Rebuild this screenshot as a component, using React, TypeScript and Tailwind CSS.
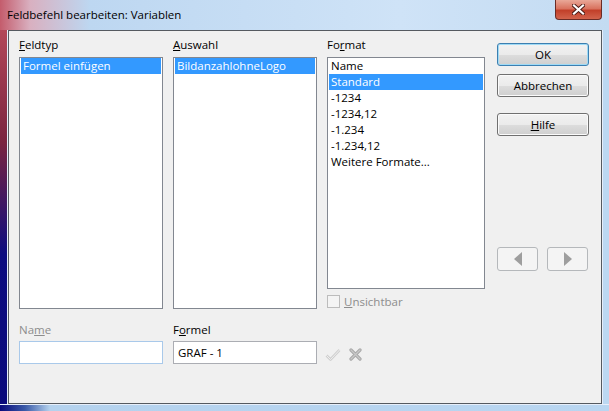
import React from "react";

const font = { fontFamily: "'Open Sans', 'Noto Sans', sans-serif" };

function ListBox({ items, selected, className }: { items: string[]; selected: number; className: string }) {
  return (
    <div className={`border border-[#828790] bg-white px-[1px] ${className}`}>
      {items.map((it, i) => (
        <div
          key={i}
          className={`h-[16px] leading-[16px] pl-[2px] whitespace-nowrap text-[11.5px] ${
            i === selected ? "bg-[#3399ff] text-white" : "text-black"
          }`}
        >
          {it}
        </div>
      ))}
    </div>
  );
}

function Btn({ children, def }: { children: React.ReactNode; def?: boolean }) {
  return (
    <div
      className={`w-[92px] h-[23px] rounded-[3px] border flex items-center justify-center text-[11.5px] text-black bg-[linear-gradient(to_bottom,#f2f2f2_0%,#ebebeb_50%,#dddddd_51%,#cfcfcf_100%)] ${
        def ? "border-[#3c7fb1] shadow-[inset_0_0_0_1px_#9fdaf5]" : "border-[#707070] shadow-[inset_0_0_0_1px_#fbfbfb]"
      }`}
    >
      {children}
    </div>
  );
}

function ArrowBtn({ dir }: { dir: "l" | "r" }) {
  return (
    <div className="w-[41px] h-[24px] rounded-[3px] border border-[#b5b8bb] bg-[#f4f4f4] flex items-center justify-center">
      <svg width="10" height="14" viewBox="0 0 10 14">
        {dir === "l" ? <polygon points="9,0 9,14 1,7" fill="#9e9e9e" /> : <polygon points="1,0 1,14 9,7" fill="#9e9e9e" />}
      </svg>
    </div>
  );
}

export default function App() {
  return (
    <div
      className="w-[609px] h-[411px] flex flex-col overflow-hidden bg-[linear-gradient(to_right,#c45c6c_0px,#d9b0c0_30px,#bdd7f1_90px,#cfe3f7_400px,#c3dbf2_609px)]"
      style={font}
    >
      {/* title bar */}
      <div className="h-[30px] flex items-start shrink-0">
        <div className="ml-[7px] mt-[7px] text-[11.5px] leading-[16px] text-black">Feldbefehl bearbeiten: Variablen</div>
        <div className="flex-1" />
        <div className="mr-[7px] w-[47px] h-[20px] rounded-b-[4px] border border-t-0 border-[#6a2b25] bg-[linear-gradient(to_bottom,#e9a898_0%,#d9735f_45%,#c2402a_55%,#d2634c_100%)] flex items-center justify-center">
          <svg width="13" height="11" viewBox="0 0 13 11">
            <path d="M2 1.5 L11 9.5 M11 1.5 L2 9.5" stroke="#4a1a14" strokeWidth="4" strokeLinecap="square" />
            <path d="M2 1.5 L11 9.5 M11 1.5 L2 9.5" stroke="#ffffff" strokeWidth="2.2" strokeLinecap="square" />
          </svg>
        </div>
      </div>
      {/* middle */}
      <div className="flex-1 flex min-h-0">
        <div className="w-[8px] bg-[linear-gradient(to_bottom,#b34859_0%,#7a2440_30%,#0c0c80_60%,#0a0a7c_100%)] border-r border-[#e6eefa]" />
        <div className="w-[594px] border border-[#555a60] bg-[#f0f0f0] flex flex-col text-[11.5px] text-black">
          <div className="flex pl-[10px] pt-[6px]">
            {/* Feldtyp */}
            <div className="w-[144px] flex flex-col">
              <div className="h-[15px] leading-[15px] mb-[5px]"><span className="underline">F</span>eldtyp</div>
              <ListBox items={["Formel einfügen"]} selected={0} className="h-[252px]" />
            </div>
            {/* Auswahl */}
            <div className="w-[144px] ml-[10px] flex flex-col">
              <div className="h-[15px] leading-[15px] mb-[5px]"><span className="underline">A</span>uswahl</div>
              <ListBox items={["BildanzahlohneLogo"]} selected={0} className="h-[252px]" />
            </div>
            {/* Format */}
            <div className="w-[158px] ml-[10px] flex flex-col">
              <div className="h-[15px] leading-[15px] mb-[5px]">Fo<span className="underline">r</span>mat</div>
              <ListBox
                items={["Name", "Standard", "-1234", "-1234,12", "-1.234", "-1.234,12", "Weitere Formate..."]}
                selected={1}
                className="h-[232px]"
              />
              <div className="flex items-center mt-[6px] h-[13px]">
                <div className="w-[13px] h-[13px] border border-[#bcbcbc] bg-[#f4f4f4]" />
                <div className="ml-[4px] text-[#8d8d8d]"><span className="underline">U</span>nsichtbar</div>
              </div>
            </div>
            {/* buttons */}
            <div className="ml-[12px] pt-[6px] flex flex-col">
              <Btn def>OK</Btn>
              <div className="h-[8px]" />
              <Btn>Abbrechen</Btn>
              <div className="h-[16px]" />
              <Btn><span><span className="underline">H</span>ilfe</span></Btn>
              <div className="h-[111px]" />
              <div className="flex gap-[9px]">
                <ArrowBtn dir="l" />
                <ArrowBtn dir="r" />
              </div>
            </div>
          </div>
          {/* bottom row */}
          <div className="flex pl-[10px] mt-[13px]">
            <div className="w-[144px] flex flex-col">
              <div className="h-[15px] leading-[15px] mb-[4px] text-[#8d8d8d]">Na<span className="underline">m</span>e</div>
              <div className="h-[23px] border border-[#a9c9ea] bg-white" />
            </div>
            <div className="w-[144px] ml-[10px] flex flex-col">
              <div className="h-[15px] leading-[15px] mb-[4px]">F<span className="underline">o</span>rmel</div>
              <div className="h-[23px] border border-[#abadb3] bg-white flex items-center pl-[4px]">GRAF - 1</div>
            </div>
            <div className="ml-[8px] mt-[23px] flex items-center gap-[8px]">
              <svg width="16" height="14" viewBox="0 0 16 14">
                <path d="M1.5 7.5 L5.5 11.5 L14.5 2" fill="none" stroke="#cfcfcf" strokeWidth="2.6" strokeLinejoin="round" />
                <path d="M1.5 7.5 L5.5 11.5 L14.5 2" fill="none" stroke="#f2f2f2" strokeWidth="0.9" strokeLinejoin="round" />
              </svg>
              <svg width="13" height="13" viewBox="0 0 13 13">
                <path d="M2 2 L11 11 M11 2 L2 11" stroke="#a8a8a8" strokeWidth="3.2" strokeLinecap="round" />
                <path d="M2 2 L11 11 M11 2 L2 11" stroke="#c8c8c8" strokeWidth="1.2" strokeLinecap="round" />
              </svg>
            </div>
          </div>
        </div>
        <div className="flex-1 bg-[#bcd8f2] border-l border-[#e6eefa]" />
      </div>
      <div className="h-[7px] shrink-0 bg-[linear-gradient(to_right,#0a0a7c_0px,#3a5aa8_25px,#b4d2ee_50px,#b9d6f1_609px)] border-t border-[#e6eefa]" />
    </div>
  );
}
